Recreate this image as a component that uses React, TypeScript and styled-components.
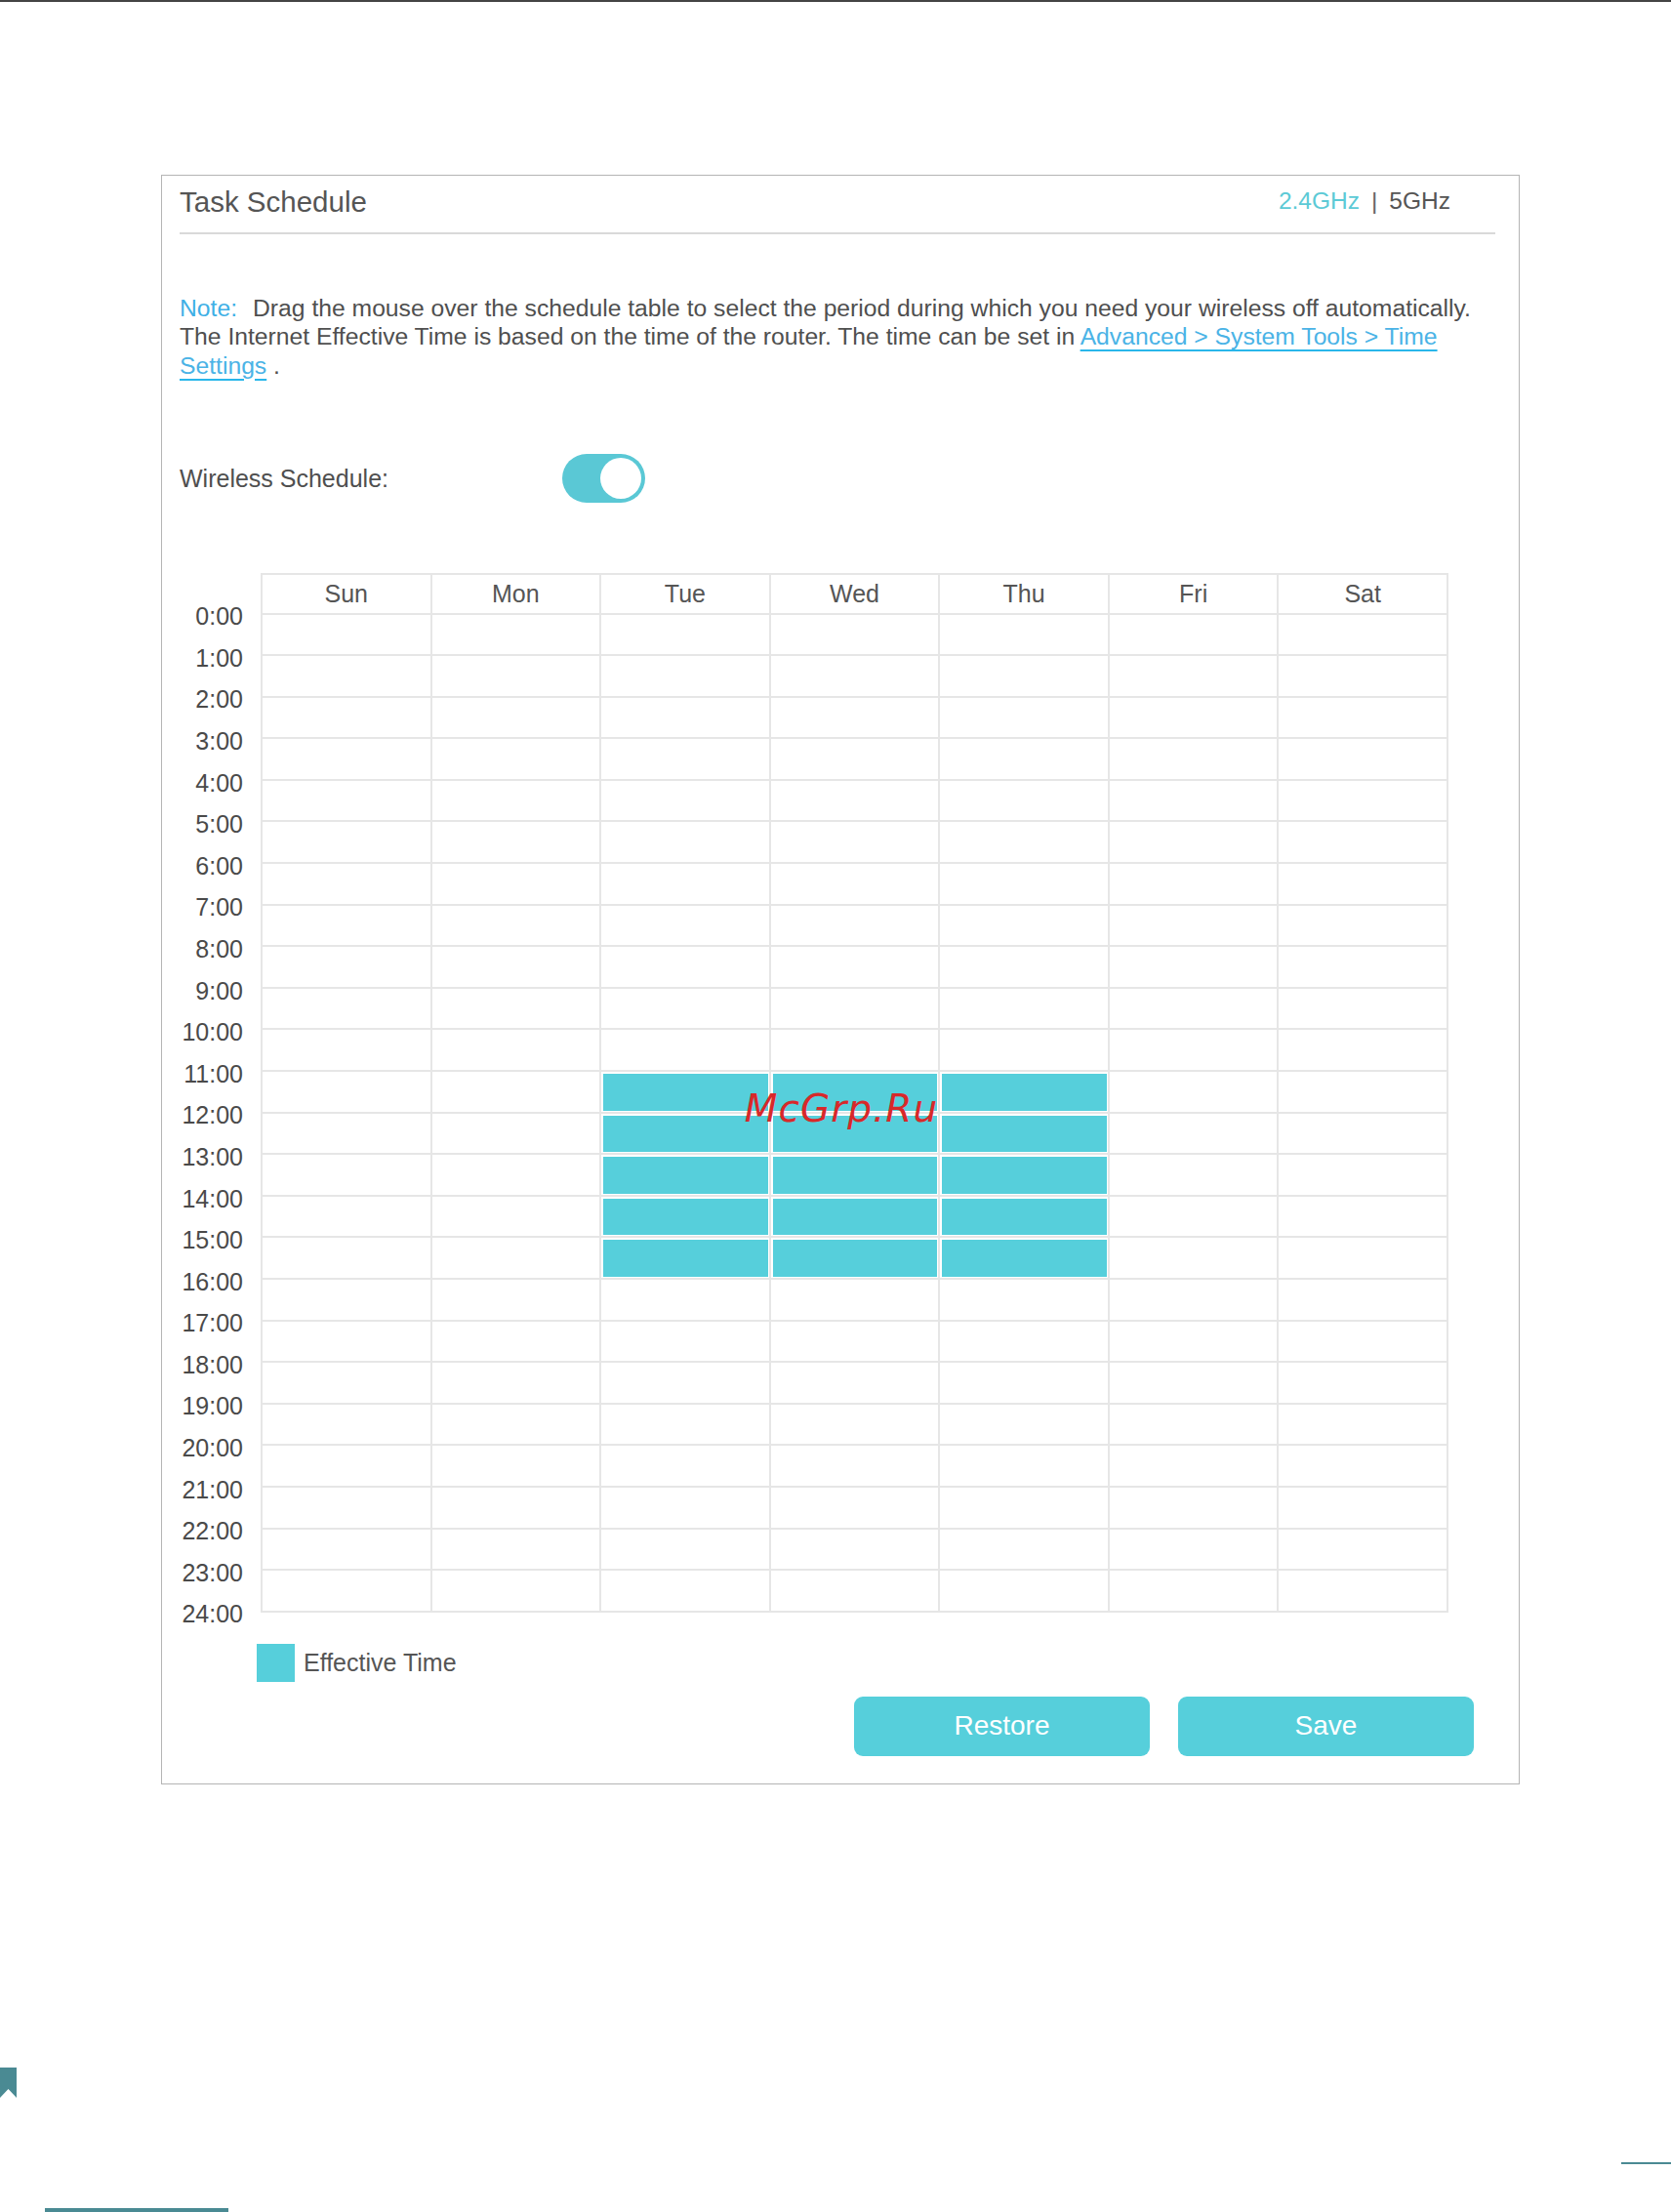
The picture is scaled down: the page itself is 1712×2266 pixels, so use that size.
import React from 'react';
import styled, { createGlobalStyle } from 'styled-components';

const ACCENT = '#56cfdb';
const LINE = '#e6e6e6';
const ROW = 42.6;
const DAYS = ['Sun', 'Mon', 'Tue', 'Wed', 'Thu', 'Fri', 'Sat'];
const HOURS = Array.from({ length: 25 }, (_, i) => `${i}:00`);
const isActive = (day: number, hour: number) => day >= 2 && day <= 4 && hour >= 11 && hour < 16;

const Global = createGlobalStyle`
  html, body { margin: 0; padding: 0; background: #fff; }
  body { font-family: "Liberation Sans", Arial, sans-serif; color: #4f4f4f; }
  * { box-sizing: border-box; }
`;

const Page = styled.div`
  width: 1712px;
  height: 2266px;
  display: flex;
  flex-direction: column;
  overflow: hidden;
`;

const TopRule = styled.div`
  height: 2px;
  background: #444;
  flex-shrink: 0;
`;

const Panel = styled.section`
  margin: 177px 0 0 165px;
  width: 1392px;
  height: 1649px;
  border: 1px solid #b5b5b5;
  display: flex;
  flex-direction: column;
  flex-shrink: 0;
`;

const Header = styled.header`
  margin: 0 24px 0 18px;
  padding: 8.5px 46px 14px 0;
  display: flex;
  justify-content: space-between;
  align-items: center;
  border-bottom: 2px solid #d9d9d9;
`;

const Title = styled.h2`
  margin: 0;
  font-size: 29.5px;
  line-height: 35px;
  font-weight: normal;
  color: #555;
`;

const Bands = styled.div`
  display: flex;
  align-items: center;
  gap: 12px;
  font-size: 24.5px;
`;

const Band = styled.span<{ $active?: boolean }>`
  color: ${(p) => (p.$active ? '#5ccad6' : '#555')};
`;

const Sep = styled.span`
  color: #666;
`;

const Note = styled.p`
  margin: 61px 24px 0 18px;
  font-size: 24.7px;
  line-height: 29.5px;
`;

const NoteLabel = styled.span`
  color: #3fb0e6;
  margin-right: 16px;
`;

const Link = styled.a`
  color: #4ab3e6;
  text-decoration: underline;
  text-decoration-color: #29b6ea;
  text-decoration-thickness: 2px;
  text-underline-offset: 5px;
`;

const SwitchRow = styled.div`
  margin-top: 76px;
  padding-left: 18px;
  display: flex;
  align-items: center;
  height: 50px;
`;

const SwitchLabel = styled.span`
  width: 392px;
  font-size: 25px;
`;

const Toggle = styled.div<{ $on?: boolean }>`
  width: 85px;
  height: 50px;
  border-radius: 25px;
  background: ${(p) => (p.$on ? '#5ac8d5' : '#ccc')};
  padding: 4px;
  display: flex;
  justify-content: ${(p) => (p.$on ? 'flex-end' : 'flex-start')};
`;

const Knob = styled.span`
  width: 42px;
  height: 42px;
  border-radius: 50%;
  background: #fff;
`;

const Schedule = styled.div`
  position: relative;
  margin-top: 71.5px;
  padding-left: 18px;
  display: flex;
`;

const TimeAxis = styled.div`
  width: 65px;
  margin-right: 18px;
  padding-top: 23.7px;
  display: flex;
  flex-direction: column;
`;

const TimeLabel = styled.div`
  height: ${ROW}px;
  line-height: ${ROW}px;
  text-align: right;
  font-size: 25px;
  color: #4a4a4a;
`;

const Grid = styled.div`
  width: 1217px;
  display: grid;
  grid-template-columns: repeat(7, 1fr);
  grid-template-rows: 41px repeat(24, ${ROW}px);
  border-top: 2px solid ${LINE};
  border-left: 2px solid ${LINE};
  align-self: flex-start;
`;

const DayCell = styled.div`
  border-right: 2px solid ${LINE};
  border-bottom: 2px solid ${LINE};
  display: flex;
  align-items: center;
  justify-content: center;
  font-size: 25px;
  color: #555;
`;

const Cell = styled.div`
  border-right: 2px solid ${LINE};
  border-bottom: 2px solid ${LINE};
  padding: 2px 1px 1px 2px;
`;

const Fill = styled.div<{ $on?: boolean }>`
  height: 100%;
  background: ${(p) => (p.$on ? ACCENT : 'transparent')};
`;

const Watermark = styled.span`
  position: absolute;
  left: 696px;
  top: 548px;
  transform: translate(-50%, -50%);
  font-family: "DejaVu Sans", sans-serif;
  font-style: italic;
  font-size: 39px;
  letter-spacing: 1px;
  color: #d8282a;
  white-space: nowrap;
  pointer-events: none;
`;

const Legend = styled.div`
  margin-top: 9px;
  padding-left: 97px;
  display: flex;
  align-items: center;
  gap: 9px;
  font-size: 25px;
  color: #555;
`;

const Swatch = styled.span`
  width: 39px;
  height: 39px;
  background: ${ACCENT};
`;

const Actions = styled.div`
  margin-top: 14.5px;
  padding-right: 46px;
  display: flex;
  justify-content: flex-end;
  gap: 29px;
`;

const Button = styled.button`
  width: 303px;
  height: 61px;
  border: none;
  border-radius: 9px;
  background: ${ACCENT};
  color: #fff;
  font-family: "Liberation Sans", Arial, sans-serif;
  font-size: 28px;
  cursor: pointer;
`;

const Footer = styled.div`
  display: flex;
  flex-direction: column;
  flex-shrink: 0;
`;

const Bookmark = styled.svg`
  display: block;
  margin-top: 290px;
`;

const FooterRow = styled.div`
  height: 117px;
  display: flex;
  justify-content: space-between;
`;

const LeftRule = styled.div`
  align-self: flex-end;
  margin-left: 46px;
  width: 188px;
  height: 4px;
  background: #4a8a93;
`;

const RightRule = styled.div`
  margin-top: 66px;
  width: 51px;
  height: 2px;
  background: #4a8a93;
`;

export default function App() {
  return (
    <Page>
      <Global />
      <TopRule />
      <Panel>
        <Header>
          <Title>Task Schedule</Title>
          <Bands>
            <Band $active>2.4GHz</Band>
            <Sep>|</Sep>
            <Band>5GHz</Band>
          </Bands>
        </Header>
        <Note>
          <NoteLabel>Note:</NoteLabel>Drag the mouse over the schedule table to select the period during which you need your wireless off automatically.
          <br />
          The Internet Effective Time is based on the time of the router. The time can be set in{' '}
          <Link href="#">
            Advanced &gt; System Tools &gt; Time
            <br />
            Settings
          </Link>{' '}
          .
        </Note>
        <SwitchRow>
          <SwitchLabel>Wireless Schedule:</SwitchLabel>
          <Toggle $on>
            <Knob />
          </Toggle>
        </SwitchRow>
        <Schedule>
          <TimeAxis>
            {HOURS.map((h) => (
              <TimeLabel key={h}>{h}</TimeLabel>
            ))}
          </TimeAxis>
          <Grid>
            {DAYS.map((d) => (
              <DayCell key={d}>{d}</DayCell>
            ))}
            {Array.from({ length: 24 }, (_, hour) =>
              DAYS.map((d, day) => (
                <Cell key={`${d}-${hour}`}>
                  <Fill $on={isActive(day, hour)} />
                </Cell>
              ))
            )}
          </Grid>
          <Watermark>McGrp.Ru</Watermark>
        </Schedule>
        <Legend>
          <Swatch />
          Effective Time
        </Legend>
        <Actions>
          <Button>Restore</Button>
          <Button>Save</Button>
        </Actions>
      </Panel>
      <Footer>
        <Bookmark width="17" height="31" viewBox="0 0 17 31">
          <polygon points="0,0 17,0 17,31 8.5,22 0,31" fill="#4a8a93" />
        </Bookmark>
        <FooterRow>
          <LeftRule />
          <RightRule />
        </FooterRow>
      </Footer>
    </Page>
  );
}
